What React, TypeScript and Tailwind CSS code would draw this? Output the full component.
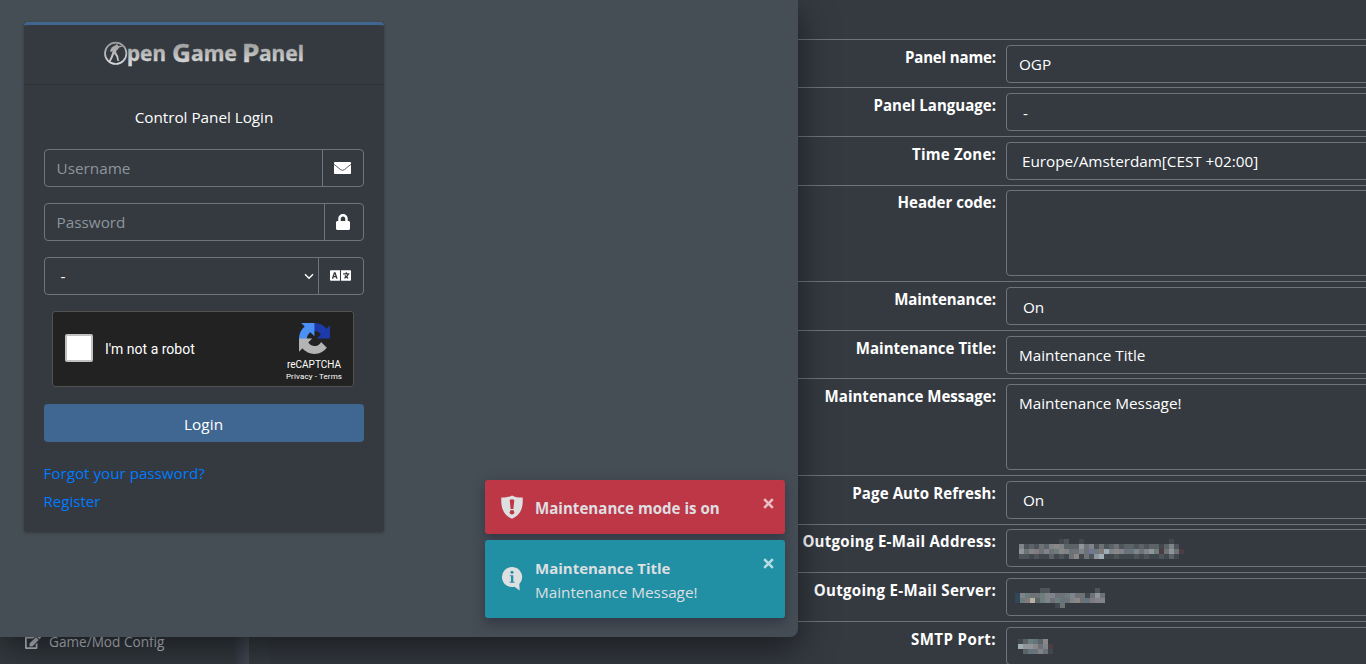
import React from "react";
import { FaEdit, FaLanguage, FaLock } from "react-icons/fa";

type Row = {
  label: string;
  labelCls?: string;
  value?: string;
  row: string;
  box: string;
  mosaic?: { cells: string[]; cls: string };
};

const palette: Record<string, string> = {
  a: "#40474d",
  b: "#4d555a",
  c: "#5c6367",
  d: "#6d7277",
  e: "#7f838a",
  f: "#90949b",
  g: "#9fadb4",
  r: "#84797c",
  n: "#6d7d7b",
  s: "#64747f",
  t: "#8c8684",
  p: "#73759a",
  k: "#4c3d42",
  z: "#32485a",
  w: "#b4b0a2",
};

const mosaicAddress = [
  "        ab  a                 a ",
  "ebcbdcetecccfdebdbcdbccbcbccaceb",
  "fderdednteddedpnrgetedsedefnkdfdk",
  "bbabaacabadtadbfgaabaaababaabaca",
];
const mosaicServer = [
  "     bb         b ",
  "zenddneeddneddadfd",
  "znrwcnednsdetdsree",
  "        ad        ",
];
const mosaicPort = ["acnsct", "gfftdek", " csdeda"];

const rows: Row[] = [
  { label: "Panel name:", labelCls: "tracking-[-0.15px]", value: "OGP", row: "h-[48px] pt-[5px]", box: "h-[38px] pl-[12px] pt-[6px]" },
  { label: "Panel Language:", value: "-", row: "h-[49px] pt-[5px]", box: "h-[38px] pl-[16px] pt-[7px]" },
  { label: "Time Zone:", labelCls: "tracking-[0.2px]", value: "Europe/Amsterdam[CEST +02:00]", row: "h-[49px] pt-[5px]", box: "h-[38px] pl-[15px] pt-[6px]" },
  { label: "Header code:", value: "", row: "h-[96px] pt-[4px]", box: "h-[86px] pl-[12px] pt-[6px]" },
  { label: "Maintenance:", labelCls: "tracking-[-0.1px]", value: "On", row: "h-[49px] pt-[5px]", box: "h-[38px] pl-[16px] pt-[7px]" },
  { label: "Maintenance Title:", value: "Maintenance Title", row: "h-[48px] pt-[5px]", box: "h-[38px] pl-[12px] pt-[6px]" },
  { label: "Maintenance Message:", value: "Maintenance Message!", row: "h-[97px] pt-[5px]", box: "h-[86px] pl-[12px] pt-[6px]" },
  { label: "Page Auto Refresh:", labelCls: "tracking-[0.1px]", value: "On", row: "h-[49px] pt-[5px]", box: "h-[38px] pl-[16px] pt-[6px]" },
  { label: "Outgoing E-Mail Address:", labelCls: "tracking-[0.27px]", row: "h-[48px] pt-[4px]", box: "h-[38px] pl-[12px] pt-[6px]", mosaic: { cells: mosaicAddress, cls: "mt-[3px]" } },
  { label: "Outgoing E-Mail Server:", labelCls: "tracking-[0.3px]", row: "h-[49px] pt-[5px]", box: "h-[38px] pl-[8px] pt-[6px]", mosaic: { cells: mosaicServer, cls: "mt-[3px]" } },
  { label: "SMTP Port:", labelCls: "tracking-[0.4px]", row: "h-[49px] pt-[5px]", box: "h-[38px] pl-[11px] pt-[6px]", mosaic: { cells: mosaicPort, cls: "mt-[5px]" } },
];

function Mosaic({ cells, cls }: { cells: string[]; cls: string }) {
  return (
    <svg className={`block ${cls}`} width="175" height={cells.length * 5} shapeRendering="crispEdges">
      {cells.flatMap((line, y) =>
        line.split("").map((c, x) =>
          palette[c] ? <rect key={`${x}-${y}`} x={x * 5} y={y * 5} width="5" height="5" fill={palette[c]} /> : null,
        ),
      )}
    </svg>
  );
}

function SettingsTable() {
  return (
    <div className="w-[569px]">
      {rows.map((r) => (
        <div key={r.label} className={`flex border-t border-[#6c757d] ${r.row}`}>
          <div className={`w-[199px] shrink-0 whitespace-nowrap text-right text-[15.05px] font-bold ${r.labelCls ?? ""}`}>{r.label}</div>
          <div className={`ml-[10px] w-[400px] shrink-0 rounded border border-[#6c757d] bg-[#343a40] tracking-[-0.03px] ${r.box}`}>
            {r.mosaic ? <Mosaic {...r.mosaic} /> : r.value}
          </div>
        </div>
      ))}
    </div>
  );
}

function Logo() {
  return (
    <svg width="204" height="32" viewBox="0 0 204 32" className="block">
      <defs>
        <linearGradient id="silver" x1="0" y1="6" x2="0" y2="27" gradientUnits="userSpaceOnUse">
          <stop offset="0" stopColor="#9c9c9c" />
          <stop offset="0.4" stopColor="#b0b0b0" />
          <stop offset="1" stopColor="#d8d8d8" />
        </linearGradient>
      </defs>
      <circle cx="13.7" cy="17.3" r="10.7" fill="none" stroke="url(#silver)" strokeWidth="1.7" />
      <path
        d="M13 9.600l1.500-1.400 1.500.6.2 1.200 4.600-.4v.9l-3.700 1-1.500 2.300-1.300.8-.1 2.200 2 3.200.5 3.900 1.300.9h-2.700l-.9-4.100-2.200-2.900-1.400 3.500-2.200 4.100-1.900-.1 1.700-3.500 1.400-3.800.9-3.600-1.100 1.400-1.800-.5 1.900-3.900 1.800-1.200z"
        fill="url(#silver)"
      />
      <g fill="url(#silver)" stroke="url(#silver)" strokeWidth="0.35" fontFamily="'Noto Sans', sans-serif" fontWeight="700" fontSize="22">
        <text x="25" y="25" textLength="39" lengthAdjust="spacingAndGlyphs">pen</text>
        <text x="70" y="26" fontSize="25" textLength="19" lengthAdjust="spacingAndGlyphs">G</text>
        <text x="89" y="25" textLength="46" lengthAdjust="spacingAndGlyphs">ame</text>
        <text x="140" y="26" fontSize="25" textLength="17.5" lengthAdjust="spacingAndGlyphs">P</text>
        <text x="157" y="25" textLength="45" lengthAdjust="spacingAndGlyphs">anel</text>
      </g>
    </svg>
  );
}

function Envelope() {
  return (
    <svg width="17" height="12" viewBox="0 0 17 12">
      <rect width="17" height="12" rx="0.8" fill="#fff" />
      <path d="M0 2.300l6.700 5.400q1.800 1.200 3.600 0L17 2.300" fill="none" stroke="#343a40" strokeWidth="0.8" />
    </svg>
  );
}

function RecaptchaMark() {
  return (
    <svg width="31" height="31" viewBox="0 0 64 64" className="block">
      <path fill="#1c3aa9" d="M64 31.955l-.033-1.37V4.687l-7.16 7.16C50.948 4.674 42.033.093 32.05.093c-10.4 0-19.622 4.96-25.458 12.64l11.736 11.86a15.55 15.55 0 0 1 4.754-5.334c2.05-1.6 4.952-2.906 8.968-2.906.485 0 .86.057 1.135.163 4.976.393 9.288 3.14 11.828 7.124l-8.307 8.307L64 31.953" />
      <path fill="#4a90f5" d="M31.862.094l-1.37.033H4.594l7.16 7.16C4.58 13.147 0 22.06 0 32.046c0 10.4 4.96 19.622 12.64 25.458L24.5 45.768a15.55 15.55 0 0 1-5.334-4.754c-1.6-2.05-2.906-4.952-2.906-8.968 0-.485.057-.86.163-1.135.393-4.976 3.14-9.288 7.124-11.828l8.307 8.307L31.86.095" />
      <path fill="#b4b4b4" d="M.001 32.045l.033 1.37v25.898l7.16-7.16c5.86 7.173 14.774 11.754 24.76 11.754 10.4 0 19.622-4.96 25.458-12.64l-11.736-11.86a15.55 15.55 0 0 1-4.754 5.334c-2.05 1.6-4.952 2.906-8.968 2.906-.485 0-.86-.057-1.135-.163-4.976-.393-9.288-3.14-11.828-7.124l8.307-8.307c-10.522.04-22.4.066-27.295-.005" />
    </svg>
  );
}

function InputRow({ children, addon, addonCls, dim = true }: { children: React.ReactNode; addon: React.ReactNode; addonCls: string; dim?: boolean }) {
  return (
    <div className="mb-4 flex h-[38px] rounded border border-[#6c757d]">
      <div className={`flex flex-1 items-center pl-[11.5px] ${dim ? "text-[#8d959c]" : "text-white"}`}>{children}</div>
      <div className={`flex items-center justify-center border-l border-[#6c757d] pr-[2px] ${addonCls}`}>{addon}</div>
    </div>
  );
}

function LoginCard() {
  return (
    <div className="h-[510px] w-[360px] rounded border-t-[3px] border-[#3f6791] bg-[#343a40] shadow-[0_0_1px_rgba(0,0,0,.125),0_1px_3px_rgba(0,0,0,.25)]">
      <div className="flex h-[60px] justify-center border-b border-[#2c3136] pt-[11px]">
        <Logo />
      </div>
      <div className="px-5 pt-5">
        <p className="mb-5 text-center tracking-[-0.03px]">Control Panel Login</p>
        <InputRow addon={<Envelope />} addonCls="w-[41px]">Username</InputRow>
        <InputRow addon={<FaLock className="size-4" />} addonCls="w-[39px]">Password</InputRow>
        <InputRow
          dim={false}
          addonCls="w-[45px]"
          addon={<FaLanguage className="-mt-px h-[17px] w-[21px]" />}
        >
          <span className="ml-1 flex-1">-</span>
          <svg width="10" height="7" viewBox="0 0 10 7" className="mr-1">
            <path d="M1 1.200l4 4 4-4" fill="none" stroke="#fff" strokeWidth="1.400" />
          </svg>
        </InputRow>
        <div className="ml-2 flex h-[76px] w-[302px] rounded-[3px] border border-[#525252] bg-[#222] font-[Roboto,sans-serif]">
          <div className="ml-[12px] mt-[22px] size-7 rounded-[2px] border-2 border-[#c1c1c1] bg-white" />
          <div className="ml-[12px] mt-[25px] text-[14px] leading-6">I'm not a robot</div>
          <div className="ml-auto mr-[9px] flex w-[60px] flex-col items-center pt-[11px]">
            <RecaptchaMark />
            <div className="mt-[5px] text-[10px] leading-3">reCAPTCHA</div>
            <div className="mt-px whitespace-nowrap text-[8px] leading-[10px] tracking-[0.12px]">Privacy - Terms</div>
          </div>
        </div>
        <div className="mt-[17px] flex h-[38px] items-center justify-center rounded bg-[#3f6791] pr-px pt-[2px] tracking-[0.1px]">Login</div>
        <p className="-ml-[0.5px] mt-[19px] text-[15.2px] text-[#007bff]">Forgot your password?</p>
        <p className="-ml-[0.5px] mt-1 text-[15.1px] text-[#007bff]">Register</p>
      </div>
    </div>
  );
}

function Close() {
  return (
    <svg width="11" height="11" viewBox="0 0 11 11">
      <path d="M1.200 1.200l8.600 8.600M9.800 1.200l-8.600 8.600" stroke="#fff" strokeOpacity=".68" strokeWidth="2.600" />
    </svg>
  );
}

function Toasts() {
  return (
    <div className="absolute left-[485px] top-[480px] flex w-[300px] flex-col gap-[6px] text-[#dedfe0]">
      <div className="flex h-[54px] rounded-[3px] bg-[#bd3747] pl-4 pr-[11px] shadow-[0_4px_12px_rgba(35,38,52,.55)]">
        <svg width="22" height="24" viewBox="0 0 22 24" className="mt-[15px]">
          <path d="M11 .4c3 1.700 6.600 2.300 10.700 2.200C22.300 12.800 19.500 20.200 11 23.700 2.500 20.200-.3 12.800.3 2.600 4.400 2.700 8 2.100 11 .4z" fill="#dedfe0" />
          <path d="M8.700 5q2.300-1.700 4.600 0l-.9 9h-2.800z" fill="#bd3747" />
          <circle cx="11" cy="17.200" r="2.300" fill="#bd3747" />
        </svg>
        <div className="ml-3 mt-[16px] flex-1 text-[15.1px] font-bold">Maintenance mode is on</div>
        <div className="mt-[18px]"><Close /></div>
      </div>
      <div className="flex h-[78px] rounded-[3px] bg-[#2190a5] pl-4 pr-[11px] shadow-[0_5px_12px_rgba(35,38,52,.55)]">
        <svg width="22" height="26" viewBox="0 0 22 26" className="mt-[26px]">
          <path d="M11 1a10 10 0 0 1 7.300 16.900l.4 6.600-5.300-3.800A10 10 0 1 1 11 1z" fill="#dedfe0" />
          <circle cx="11" cy="6.300" r="1.500" fill="#2190a5" />
          <path d="M8.800 9.200h3.500v6.500h1.200v1.100H8.700v-1.100H10v-5.400H8.800z" fill="#2190a5" />
        </svg>
        <div className="ml-3 mt-[16px] flex-1">
          <div className="text-[15px] font-bold">Maintenance Title</div>
          <div className="tracking-[-0.03px]">Maintenance Message!</div>
        </div>
        <div className="mt-[18px]"><Close /></div>
      </div>
    </div>
  );
}

export default function App() {
  return (
    <div className="relative h-[664px] w-[1366px] overflow-hidden bg-[#353a41] font-['Open_Sans',sans-serif] text-[15.3px] leading-6 text-white">
      <div className="flex h-full">
        <div className="flex w-[235px] flex-col justify-end bg-[#343a40] pb-[10px] pl-[25px]">
          <div className="flex items-center whitespace-nowrap text-[13.6px] text-[#c2c7d0]">
            <FaEdit className="mr-[8px] size-4" />
            Game/Mod Config
          </div>
        </div>
        <div className="w-[14px] bg-gradient-to-r from-[#363c44] to-[#464d5a]" />
        <div className="w-[20px] bg-[#363c41]" />
        <div className="flex flex-1 justify-end pt-[39px]">
          <SettingsTable />
        </div>
      </div>
      <div className="absolute left-0 top-0 h-[637px] w-[798px] rounded-br-lg bg-[#454d55] pl-6 pt-[22px] shadow-[0_12px_36px_rgba(0,0,0,.5)]">
        <LoginCard />
        <Toasts />
      </div>
    </div>
  );
}
